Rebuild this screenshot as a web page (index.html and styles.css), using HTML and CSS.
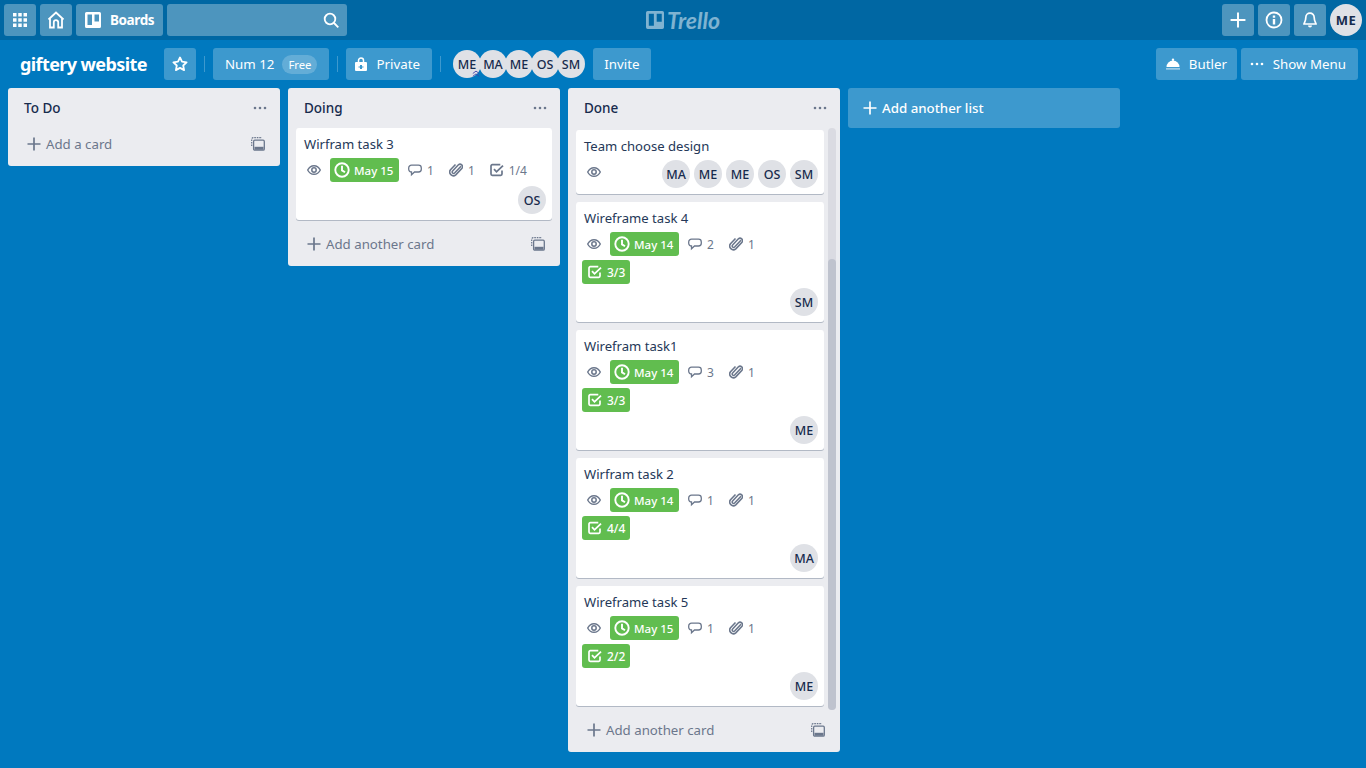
FILE: index.html
```html
<!DOCTYPE html>
<html>
    <head>
        <title>giftery website | Trello</title>
        <link rel="stylesheet" href="styles.css">
    </head>
    <body>
        <svg class="sprites" xmlns="http://www.w3.org/2000/svg">
            <symbol id="i-eye" viewBox="0 0 14 14"><path d="M.7 7C2.100 4.200 4.400 2.700 7 2.700s4.900 1.500 6.300 4.300c-1.400 2.800-3.700 4.300-6.300 4.300S2.100 9.800.7 7z" fill="none" stroke="currentColor" stroke-width="1.400"/><circle cx="7" cy="7" r="2.200" fill="none" stroke="currentColor" stroke-width="1.500"/></symbol>
            <symbol id="i-clock" viewBox="0 0 16 16"><circle cx="8" cy="8" r="6.700" fill="none" stroke="currentColor" stroke-width="1.900"/><path d="M8 3.800v4.600l3 1.900" fill="none" stroke="currentColor" stroke-width="1.900"/></symbol>
            <symbol id="i-comment" viewBox="0 0 14 14"><path d="M3.500 2.200h7a2.800 2.800 0 0 1 2.800 2.800v1.200A2.800 2.800 0 0 1 10.500 9H6.500l-3 2.800V9A2.800 2.800 0 0 1 .7 6.200V5a2.800 2.800 0 0 1 2.800-2.800z" fill="none" stroke="currentColor" stroke-width="1.300"/></symbol>
            <symbol id="i-clip" viewBox="0 0 14 14"><path d="M12 3.200 5.600 10a1.400 1.400 0 0 1-2-2l5.800-6.200a2.500 2.500 0 0 1 3.600 3.400L6.800 11.800a3.700 3.700 0 0 1-5.300-5.100L6.500 1.500" fill="none" stroke="currentColor" stroke-width="1.600"/></symbol>
            <symbol id="i-check" viewBox="0 0 14 14"><path d="M12 7.500V11a1.300 1.300 0 0 1-1.300 1.300H2.300A1.300 1.300 0 0 1 1 11V3a1.300 1.300 0 0 1 1.300-1.300h8" fill="none" stroke="currentColor" stroke-width="1.700"/><path d="m4 6.200 2.500 2.600L13 2.600" fill="none" stroke="currentColor" stroke-width="1.800"/></symbol>
            <symbol id="i-compose" viewBox="0 0 14 14"><path d="M.7 9V2.200A1.500 1.500 0 0 1 2.200.7H11" fill="none" stroke="currentColor" stroke-width="1.200" stroke-dasharray="1.600 .9"/><rect x="2.600" y="3.200" width="10.700" height="10" rx="1.200" fill="none" stroke="currentColor" stroke-width="1.300"/><rect x="3.500" y="9.800" width="9" height="3" fill="currentColor"/></symbol>
            <symbol id="i-plus" viewBox="0 0 14 14"><path d="M7 .5v13M.5 7h13" fill="none" stroke="currentColor" stroke-width="1.700"/></symbol>
            <symbol id="i-dots" viewBox="0 0 14 4"><circle cx="2" cy="2" r="1.300" fill="currentColor"/><circle cx="7" cy="2" r="1.300" fill="currentColor"/><circle cx="12" cy="2" r="1.300" fill="currentColor"/></symbol>
            <symbol id="i-board" viewBox="0 0 16 16"><path fill-rule="evenodd" d="M1.500 0h13A1.500 1.500 0 0 1 16 1.500v13a1.500 1.500 0 0 1-1.500 1.500h-13A1.500 1.500 0 0 1 0 14.500v-13A1.500 1.500 0 0 1 1.500 0zM2.500 2.500v10.500h4.500V2.500zM9.500 2.500v7h4.500v-7z" fill="currentColor"/></symbol>
        </svg>

        <div class="topbar">
            <div class="topbar-left">
                <a class="top-btn">
                    <svg class="ico-16" viewBox="0 0 16 16" fill="currentColor"><path d="M1 1h3.500v3.500H1zM6.250 1h3.500v3.500h-3.500zM11.500 1H15v3.500h-3.500zM1 6.250h3.500v3.500H1zM6.250 6.250h3.500v3.500h-3.500zM11.500 6.250H15v3.500h-3.500zM1 11.500h3.500V15H1zM6.250 11.500h3.500V15h-3.500zM11.500 11.500H15V15h-3.500z"/></svg>
                </a>
                <a class="top-btn">
                    <svg class="ico-18" viewBox="0 0 18 18"><path d="M1.500 8.500 9 1.500l7.500 7M3 7.500V16.500h3.800v-5.200a2.200 2.200 0 0 1 4.400 0v5.200H15V7.500" fill="none" stroke="currentColor" stroke-width="1.800"/></svg>
                </a>
                <a class="top-btn boards-btn">
                    <svg class="ico-16"><use href="#i-board"/></svg>
                    <span>Boards</span>
                </a>
                <div class="search">
                    <svg class="ico-16" viewBox="0 0 16 16"><circle cx="7" cy="7" r="5.300" fill="none" stroke="currentColor" stroke-width="1.800"/><path d="m11 11 4.300 4.300" stroke="currentColor" stroke-width="1.800"/></svg>
                </div>
            </div>
            <div class="logo">
                <svg class="logo-mark"><use href="#i-board"/></svg>
                <span>Trello</span>
            </div>
            <div class="topbar-right">
                <a class="top-btn"><svg class="ico-16"><use href="#i-plus"/></svg></a>
                <a class="top-btn">
                    <svg class="ico-18" viewBox="0 0 18 18"><circle cx="9" cy="9" r="7.500" fill="none" stroke="currentColor" stroke-width="1.800"/><path d="M7.800 4.500h2.400v2.200H7.800zM7.800 8h2.400v5.500H7.800z" fill="currentColor"/></svg>
                </a>
                <a class="top-btn">
                    <svg class="ico-16" viewBox="0 0 16 16"><path d="M8 1.200a4.200 4.200 0 0 0-4.200 4.200c0 4-1.800 5.800-1.800 6.600h12c0-.8-1.800-2.600-1.800-6.600A4.200 4.200 0 0 0 8 1.200z" fill="none" stroke="currentColor" stroke-width="1.700"/><path d="M6 13.500h4a2 2 0 0 1-4 0z" fill="currentColor"/></svg>
                </a>
                <span class="avatar avatar-me">ME</span>
            </div>
        </div>

        <div class="board-header">
            <h1 class="board-name">giftery website</h1>
            <a class="board-btn square">
                <svg class="ico-16" viewBox="0 0 16 16"><path d="m8 1.500 2 4.200 4.600.6-3.400 3.200.9 4.600L8 11.900l-4.100 2.200.9-4.600L1.400 6.300 6 5.700z" fill="none" stroke="currentColor" stroke-width="1.800" stroke-linejoin="round"/></svg>
            </a>
            <span class="divider"></span>
            <a class="board-btn">Num 12<span class="pill">Free</span></a>
            <span class="divider"></span>
            <a class="board-btn icon-btn">
                <svg class="ico-12" viewBox="0 0 12 14"><path d="M3.500 5V3.500a2.500 2.500 0 0 1 5 0V5" fill="none" stroke="currentColor" stroke-width="1.500"/><path fill-rule="evenodd" d="M1 5h10a1 1 0 0 1 1 1v7a1 1 0 0 1-1 1H1a1 1 0 0 1-1-1V6a1 1 0 0 1 1-1zm4 3v1.500H3.500v1H5V12h2v-1.500h1.500v-1H7V8z" fill="currentColor"/></svg>
                <span>Private</span>
            </a>
            <span class="divider"></span>
            <div class="members">
                <span class="avatar">ME<svg class="admin-mark" viewBox="0 0 10 8"><path d="M1 4 5 1l4 3M1 7.500l4-3 4 3" fill="none" stroke="currentColor" stroke-width="1.100"/></svg></span>
                <span class="avatar">MA</span>
                <span class="avatar">ME</span>
                <span class="avatar">OS</span>
                <span class="avatar">SM</span>
            </div>
            <a class="board-btn invite-btn">Invite</a>
            <div class="board-header-right">
                <a class="board-btn icon-btn butler-btn">
                    <svg class="ico-16" viewBox="0 0 16 16"><path d="M1.500 11a6.500 6.500 0 0 1 13 0z" fill="currentColor"/><circle cx="8" cy="3.700" r="1.200" fill="currentColor"/><path d="M1 12.300h14v1.200H1z" fill="currentColor" opacity=".7"/></svg>
                    <span>Butler</span>
                </a>
                <a class="board-btn icon-btn">
                    <svg class="ico-14 dots-ico"><use href="#i-dots"/></svg>
                    <span>Show Menu</span>
                </a>
            </div>
        </div>

        <div class="board">
            <div class="list">
                <div class="list-head"><h2>To Do</h2><svg class="dots"><use href="#i-dots"/></svg></div>
                <div class="list-foot">
                    <svg class="foot-plus"><use href="#i-plus"/></svg><span>Add a card</span>
                    <svg class="foot-compose"><use href="#i-compose"/></svg>
                </div>
            </div>

            <div class="list">
                <div class="list-head"><h2>Doing</h2><svg class="dots"><use href="#i-dots"/></svg></div>
                <div class="cards">
                    <div class="card">
                        <div class="card-title">Wirfram task 3</div>
                        <div class="badges">
                            <span class="badge"><svg class="b-ico"><use href="#i-eye"/></svg></span>
                            <span class="badge due"><svg class="b-ico-16"><use href="#i-clock"/></svg>May 15</span>
                            <span class="badge"><svg class="b-ico"><use href="#i-comment"/></svg>1</span>
                            <span class="badge"><svg class="b-ico"><use href="#i-clip"/></svg>1</span>
                            <span class="badge"><svg class="b-ico"><use href="#i-check"/></svg>1/4</span>
                        </div>
                        <div class="card-members"><span class="avatar">OS</span></div>
                    </div>
                </div>
                <div class="list-foot">
                    <svg class="foot-plus"><use href="#i-plus"/></svg><span>Add another card</span>
                    <svg class="foot-compose"><use href="#i-compose"/></svg>
                </div>
            </div>

            <div class="list list-full">
                <div class="list-head"><h2>Done</h2><svg class="dots"><use href="#i-dots"/></svg></div>
                <div class="scroll-wrap">
                    <div class="cards cards-scrolled">
                        <div class="card">
                            <div class="card-title">Team choose design</div>
                            <div class="badges-inline">
                                <span class="badge"><svg class="b-ico"><use href="#i-eye"/></svg></span>
                                <div class="card-members">
                                    <span class="avatar">MA</span><span class="avatar">ME</span><span class="avatar">ME</span><span class="avatar">OS</span><span class="avatar">SM</span>
                                </div>
                            </div>
                        </div>
                        <div class="card">
                            <div class="card-title">Wireframe task 4</div>
                            <div class="badges">
                                <span class="badge"><svg class="b-ico"><use href="#i-eye"/></svg></span>
                                <span class="badge due"><svg class="b-ico-16"><use href="#i-clock"/></svg>May 14</span>
                                <span class="badge"><svg class="b-ico"><use href="#i-comment"/></svg>2</span>
                                <span class="badge"><svg class="b-ico"><use href="#i-clip"/></svg>1</span>
                            </div>
                            <div class="badges"><span class="badge done-check"><svg class="b-ico"><use href="#i-check"/></svg>3/3</span></div>
                            <div class="card-members"><span class="avatar">SM</span></div>
                        </div>
                        <div class="card">
                            <div class="card-title">Wirefram task1</div>
                            <div class="badges">
                                <span class="badge"><svg class="b-ico"><use href="#i-eye"/></svg></span>
                                <span class="badge due"><svg class="b-ico-16"><use href="#i-clock"/></svg>May 14</span>
                                <span class="badge"><svg class="b-ico"><use href="#i-comment"/></svg>3</span>
                                <span class="badge"><svg class="b-ico"><use href="#i-clip"/></svg>1</span>
                            </div>
                            <div class="badges"><span class="badge done-check"><svg class="b-ico"><use href="#i-check"/></svg>3/3</span></div>
                            <div class="card-members"><span class="avatar">ME</span></div>
                        </div>
                        <div class="card">
                            <div class="card-title">Wirfram task 2</div>
                            <div class="badges">
                                <span class="badge"><svg class="b-ico"><use href="#i-eye"/></svg></span>
                                <span class="badge due"><svg class="b-ico-16"><use href="#i-clock"/></svg>May 14</span>
                                <span class="badge"><svg class="b-ico"><use href="#i-comment"/></svg>1</span>
                                <span class="badge"><svg class="b-ico"><use href="#i-clip"/></svg>1</span>
                            </div>
                            <div class="badges"><span class="badge done-check"><svg class="b-ico"><use href="#i-check"/></svg>4/4</span></div>
                            <div class="card-members"><span class="avatar">MA</span></div>
                        </div>
                        <div class="card">
                            <div class="card-title">Wireframe task 5</div>
                            <div class="badges">
                                <span class="badge"><svg class="b-ico"><use href="#i-eye"/></svg></span>
                                <span class="badge due"><svg class="b-ico-16"><use href="#i-clock"/></svg>May 15</span>
                                <span class="badge"><svg class="b-ico"><use href="#i-comment"/></svg>1</span>
                                <span class="badge"><svg class="b-ico"><use href="#i-clip"/></svg>1</span>
                            </div>
                            <div class="badges"><span class="badge done-check"><svg class="b-ico"><use href="#i-check"/></svg>2/2</span></div>
                            <div class="card-members"><span class="avatar">ME</span></div>
                        </div>
                    </div>
                    <div class="scrollbar"><div class="scrollbar-thumb"></div></div>
                </div>
                <div class="list-foot">
                    <svg class="foot-plus"><use href="#i-plus"/></svg><span>Add another card</span>
                    <svg class="foot-compose"><use href="#i-compose"/></svg>
                </div>
            </div>

            <a class="add-list"><svg class="ico-14"><use href="#i-plus"/></svg>Add another list</a>
        </div>
    </body>
</html>
```

FILE: styles.css
```css
*{
    box-sizing: border-box;
}
html, body{
    height: 100%;
}
body{
    margin: 0;
    background: #0079BF;
    color: #172B4D;
    font-family: "Noto Sans", "Open Sans", sans-serif;
    font-size: 14px;
    overflow: hidden;
}
.sprites{
    display: none;
}
svg{
    display: block;
    flex: none;
}
.ico-12{
    width: 12px;
    height: 14px;
}
.ico-14{
    width: 14px;
    height: 14px;
}
.ico-16{
    width: 16px;
    height: 16px;
}
.ico-18{
    width: 18px;
    height: 18px;
}

/* top bar */
.topbar{
    display: grid;
    grid-template-columns: 1fr auto 1fr;
    align-items: center;
    height: 40px;
    padding: 4px;
    background: #0067A3;
}
.topbar-left, .topbar-right{
    display: flex;
    gap: 4px;
}
.topbar-right{
    justify-content: flex-end;
}
.top-btn{
    display: flex;
    align-items: center;
    justify-content: center;
    width: 32px;
    height: 32px;
    background: rgba(255, 255, 255, .3);
    border-radius: 3px;
    color: #FFF;
}
.boards-btn{
    width: 87px;
    justify-content: flex-start;
    padding-left: 9px;
    font-size: 13.500px;
    font-weight: 700;
    letter-spacing: -.4px;
}
.boards-btn span{
    margin-left: 9px;
}
.search{
    display: flex;
    align-items: center;
    justify-content: flex-end;
    width: 180px;
    height: 32px;
    padding-right: 8px;
    background: rgba(255, 255, 255, .3);
    border-radius: 3px;
    color: #FFF;
}
.logo{
    display: flex;
    align-items: center;
    gap: 3px;
    color: rgba(255, 255, 255, .5);
    font-family: "Lato", sans-serif;
    font-size: 23px;
    font-style: italic;
    font-weight: 700;
}
.logo-mark{
    width: 18px;
    height: 18px;
}

/* avatars */
.avatar{
    position: relative;
    display: flex;
    align-items: center;
    justify-content: center;
    width: 28px;
    height: 28px;
    background: #DFE1E6;
    border-radius: 50%;
    color: #172B4D;
    font-size: 12.500px;
    font-weight: 500;
    flex: none;
}
.avatar-me{
    width: 32px;
    height: 32px;
    font-size: 13px;
    font-weight: 700;
    letter-spacing: .5px;
}
.admin-mark{
    position: absolute;
    z-index: 1;
    right: 1px;
    bottom: 1px;
    width: 8px;
    height: 7px;
    color: #3D3FA8;
}

/* board header */
.board-header{
    display: flex;
    align-items: center;
    height: 32px;
    margin: 8px 8px 8px 0;
}
.board-name{
    width: 164px;
    margin: 0;
    padding-left: 20px;
    color: #FFF;
    font-size: 18px;
    font-weight: 700;
    letter-spacing: -.6px;
    white-space: nowrap;
}
.board-btn{
    display: flex;
    align-items: center;
    height: 32px;
    padding: 0 12px;
    background: rgba(255, 255, 255, .24);
    border-radius: 3px;
    color: #FFF;
    font-size: 13.300px;
    white-space: nowrap;
}
.board-btn.square{
    justify-content: center;
    width: 32px;
    padding: 0;
}
.icon-btn{
    gap: 9px;
    padding-left: 9px;
}
.butler-btn{
    gap: 8px;
    width: 81px;
    padding-right: 0;
}
.invite-btn{
    justify-content: center;
    width: 58px;
    padding: 0;
}
.dots-ico{
    height: 4px;
}
.pill{
    margin-left: 8px;
    padding: 2px 6px;
    background: rgba(255, 255, 255, .2);
    border-radius: 12px;
    font-size: 11.300px;
}
.divider{
    width: 1px;
    height: 16px;
    margin: 0 8px;
    background: rgba(255, 255, 255, .24);
}
.members{
    display: flex;
    margin: 0 8px 0 4px;
}
.members .avatar{
    margin-right: -2px;
}
.members .avatar:last-child{
    margin-right: 0;
}
.board-header-right{
    display: flex;
    gap: 4px;
    margin-left: auto;
}

/* lists */
.board{
    display: flex;
    align-items: flex-start;
    gap: 8px;
    padding: 0 8px;
}
.list{
    display: flex;
    flex-direction: column;
    width: 272px;
    padding-bottom: 6px;
    background: #EBECF0;
    border-radius: 3px;
    flex: none;
}
.list-head{
    display: flex;
    align-items: center;
    justify-content: space-between;
    height: 40px;
    padding: 0 13px 0 16px;
}
.list-head h2{
    margin: 0;
    font-size: 13.500px;
    font-weight: 500;
}
.dots{
    width: 14px;
    height: 4px;
    color: #6B778C;
}
.cards{
    padding: 0 8px;
}
.scroll-wrap{
    display: flex;
    height: 586px;
}
.cards-scrolled{
    width: 260px;
    padding: 2px 4px 0 8px;
}
.scrollbar{
    width: 8px;
    height: 582px;
    background: #DADBE2;
    border-radius: 4px;
}
.scrollbar-thumb{
    height: 451px;
    margin-top: 131px;
    background: #BFC3CE;
    border-radius: 4px;
}
.card{
    margin-bottom: 8px;
    padding: 6px;
    background: #FFF;
    border-radius: 3px;
    box-shadow: 0 1px 0 rgba(9, 30, 66, .25);
}
.card-title{
    height: 20px;
    margin: 0 0 4px 2px;
    color: #253858;
    font-size: 13.100px;
    line-height: 20px;
    white-space: nowrap;
}
.badges{
    display: flex;
    margin-bottom: 4px;
}
.badges-inline{
    display: flex;
    justify-content: space-between;
}
.badge{
    display: flex;
    align-items: center;
    height: 24px;
    min-width: 24px;
    margin-right: 4px;
    padding: 0 6px 0 5px;
    border-radius: 3px;
    color: #6B778C;
    font-size: 12px;
}
.badge:first-child{
    padding: 0 5px;
}
.b-ico{
    width: 14px;
    height: 14px;
    margin-right: 5px;
}
.badge:first-child .b-ico{
    margin-right: 0;
}
.b-ico-16{
    width: 16px;
    height: 16px;
    margin-right: 4px;
}
.due, .done-check{
    background: #61BD4F;
    color: #FFF;
    font-weight: 500;
}
.due{
    width: 69px;
    padding: 0 4px;
    font-size: 11.500px;
    white-space: nowrap;
}
.badge.done-check{
    width: 48px;
    padding: 0 6px;
}
.badge.done-check .b-ico{
    margin-right: 5px;
}
.card-members{
    display: flex;
    justify-content: flex-end;
    gap: 4px;
}

.list-foot{
    display: flex;
    align-items: center;
    height: 32px;
    padding: 0 15px 0 19px;
    color: #6B778C;
    font-size: 13.250px;
}
.foot-plus{
    width: 14px;
    height: 14px;
    margin-right: 5px;
}
.foot-compose{
    width: 14px;
    height: 14px;
    margin-left: auto;
}
.add-list{
    display: flex;
    align-items: center;
    gap: 5px;
    width: 272px;
    height: 40px;
    padding-left: 15px;
    background: rgba(255, 255, 255, .24);
    border-radius: 3px;
    color: #FFF;
    font-size: 13.300px;
    font-weight: 500;
    flex: none;
}
```
